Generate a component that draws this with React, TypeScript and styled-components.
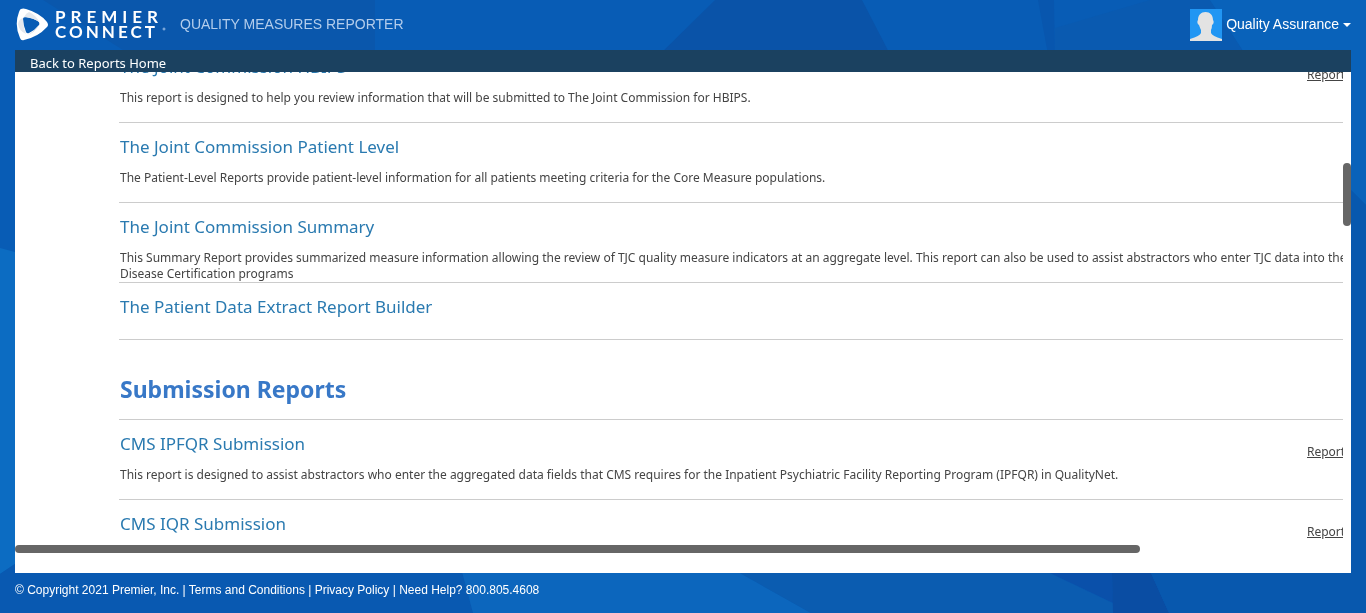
import React, { useLayoutEffect, useRef } from "react";
import styled, { createGlobalStyle } from "styled-components";

const GlobalStyle = createGlobalStyle`
  * { box-sizing: border-box; }
  body {
    margin: 0;
    background: #085cb5;
    font-family: "Liberation Sans", Arial, sans-serif;
  }
`;

const bodyFont = `Tahoma, "Noto Sans", sans-serif`;

const Page = styled.div`
  height: 100vh;
  display: flex;
  flex-direction: column;
`;

const Backdrop = styled.svg`
  position: fixed;
  inset: 0;
  width: 100%;
  height: 100%;
  z-index: -1;
`;

const Header = styled.header`
  flex: none;
  height: 50px;
  padding: 0 15px;
  display: flex;
  align-items: center;
`;

const Logo = styled.svg`
  width: 152px;
  height: 40px;
  flex: none;
`;

const LogoText = styled.text<{ $tracking: number }>`
  font-family: Lato, sans-serif;
  font-size: 17px;
  font-weight: 700;
  letter-spacing: ${(p) => p.$tracking}px;
  fill: #fff;
`;

const AppName = styled.span`
  margin-left: 13px;
  padding-bottom: 2px;
  font-size: 14px;
  line-height: 20px;
  color: #b3cdec;
  white-space: nowrap;
`;

const UserButton = styled.button`
  margin-left: auto;
  padding: 0;
  border: 0;
  background: none;
  color: #fff;
  font-family: inherit;
  font-size: 14px;
  display: flex;
  align-items: center;
  gap: 4px;
  white-space: nowrap;
`;

const Avatar = styled.svg`
  width: 32px;
  height: 32px;
`;

const UserName = styled.span`
  padding-bottom: 2px;
`;

const Caret = styled.span`
  border: 4px solid transparent;
  border-top-color: #fff;
  border-bottom: 0;
`;

const Panel = styled.main`
  flex: 1;
  min-height: 0;
  margin: 0 15px;
  padding-bottom: 20px;
  background: #fff;
  display: flex;
  flex-direction: column;
`;

const NavBar = styled.nav`
  flex: none;
  height: 22px;
  padding: 4px 15px 0;
  background: #1b4160;
`;

const NavLink = styled.a`
  display: block;
  font-family: ${bodyFont};
  font-size: 13px;
  line-height: 18px;
  color: #fff;
  text-decoration: none;
`;

const ScrollArea = styled.div`
  flex: 1;
  min-height: 0;
  display: grid;
  grid-template-columns: minmax(0, 1fr) 8px;
  grid-template-rows: minmax(0, 1fr) 8px;
`;

const Viewport = styled.div`
  overflow: auto;
  scrollbar-width: none;
  padding-left: 104px;
  font-family: ${bodyFont};
`;

const TrackY = styled.div`
  padding-top: 91px;
`;

const ThumbY = styled.div`
  height: 63px;
  border-radius: 4px;
  background: #666;
`;

const ThumbX = styled.div`
  width: 1125px;
  max-width: 100%;
  border-radius: 4px;
  background: #666;
`;

const Row = styled.article<{ $compact?: boolean }>`
  min-height: ${(p) => (p.$compact ? 57 : 80)}px;
  padding: 12px 0 0 1px;
  border-top: 1px solid #ccc;
  display: grid;
  grid-template-columns: minmax(0, 1fr) 36px;
  align-content: start;
  row-gap: 11px;
  overflow: hidden;
`;

const Title = styled.a`
  font-size: 17px;
  line-height: 24px;
  color: #2a7ab0;
  text-decoration: none;
  white-space: nowrap;
`;

const ReportLink = styled.a`
  padding-top: 12px;
  font-size: 12px;
  line-height: 16px;
  height: 24px;
  color: #444;
`;

const Description = styled.p`
  grid-column: 1 / -1;
  margin: 0;
  font-size: 12px;
  line-height: 16px;
  color: #444;
  white-space: pre;
`;

const SectionTitle = styled.h2`
  height: 80px;
  margin: 0;
  padding: 33px 0 0 1px;
  border-top: 1px solid #ccc;
  font-size: 23px;
  line-height: 32px;
  font-weight: 700;
  color: #3878c7;
`;

const Footer = styled.footer`
  flex: none;
  height: 40px;
  padding: 0 15px;
  font-size: 12px;
  line-height: 34px;
  color: #fff;
  white-space: nowrap;

  a {
    color: inherit;
    text-decoration: none;
  }
`;

interface Report {
  title: string;
  description?: string;
  link?: boolean;
}

const jointCommission: Report[] = [
  {
    title: "The Joint Commission HBIPS",
    description:
      "This report is designed to help you review information that will be submitted to The Joint Commission for HBIPS.",
    link: true,
  },
  {
    title: "The Joint Commission Patient Level",
    description:
      "The Patient-Level Reports provide patient-level information for all patients meeting criteria for the Core Measure populations.",
  },
  {
    title: "The Joint Commission Summary",
    description:
      "This Summary Report provides summarized measure information allowing the review of TJC quality measure indicators at an aggregate level. This report can also be used to assist abstractors who enter TJC data into the\nDisease Certification programs",
  },
  { title: "The Patient Data Extract Report Builder" },
];

const submissions: Report[] = [
  {
    title: "CMS IPFQR Submission",
    description:
      "This report is designed to assist abstractors who enter the aggregated data fields that CMS requires for the Inpatient Psychiatric Facility Reporting Program (IPFQR) in QualityNet.",
    link: true,
  },
  { title: "CMS IQR Submission", link: true },
];

function ReportRow({ title, description, link }: Report) {
  return (
    <Row $compact={!description}>
      <Title href="#">{title}</Title>
      {link && <ReportLink href="#">Report</ReportLink>}
      {description && <Description>{description}</Description>}
    </Row>
  );
}

function BackdropArt() {
  return (
    <Backdrop viewBox="0 0 1366 613" preserveAspectRatio="none" aria-hidden="true">
      <rect width="1366" height="613" fill="#085cb5" />
      <path d="M43 0H375V60H139Z" fill="#0a57ac" />
      <path d="M715 0H862L893 60H654Z" fill="#0a53a8" />
      <path d="M1038 0H1054L1055 60H1049Z" fill="#0856ae" />
      <path d="M1055 28L1150 0H1210L1249 60H1055Z" fill="#0a5ab0" />
      <path d="M1210 0H1366V205L1351 190V60H1249Z" fill="#0962ba" />
      <path d="M1351 190L1366 205V613H1351Z" fill="#0858ae" />
      <path d="M0 248L15 252V564L0 574Z" fill="#0c6cc2" />
      <path d="M0 574L15 564H460L473 613H0Z" fill="#0959b1" />
      <path d="M460 564L473 613H811L740 573Z" fill="#0c66bd" />
      <path d="M740 573H1050L1133 613H811Z" fill="#0b5cb0" />
      <path d="M1050 573H1112L1113 603Z" fill="#0a50aa" />
      <path d="M1112 573H1151L1169 613H1113Z" fill="#0a4da3" />
      <path d="M1151 573H1366V613H1169Z" fill="#0858ae" />
    </Backdrop>
  );
}

export default function App() {
  const viewport = useRef<HTMLDivElement>(null);

  useLayoutEffect(() => {
    if (viewport.current) viewport.current.scrollTop = 30;
  }, []);

  return (
    <Page>
      <GlobalStyle />
      <BackdropArt />
      <Header>
        <Logo viewBox="0 0 152 40" role="img" aria-label="Premier Connect">
          <path
            fillRule="evenodd"
            fill="#fff"
            d="M6 4Q8 3 11 4Q25 8 32 17Q34 20 32 22Q23 32 9 35Q6 36 5 33Q-1 20 4 7Q5 4 6 4ZM8 14Q8 20 11 27Q12 29 14 28Q20 25 24 20Q25 18 23 16Q18 13 11 12Q8 12 8 14Z"
          />
          <path d="M14 7Q21 10 25 18Q20 13 9 12Q11 8 14 7Z" fill="#e3e8ee" />
          <path d="M24 20Q21 27 9 32Q18 28 24 20Z" fill="#d5dbe3" />
          <path d="M3 19Q4 26 11 29Q8 22 8 13Q4 14 3 19Z" fill="#e5e8ed" />
          <LogoText x="40" y="18" $tracking={5}>PREMIER</LogoText>
          <LogoText x="40" y="33" $tracking={3}>CONNECT</LogoText>
          <circle cx="149" cy="24" r="1" fill="none" stroke="#9fc0e6" />
        </Logo>
        <AppName>QUALITY MEASURES REPORTER</AppName>
        <UserButton type="button">
          <Avatar viewBox="0 0 32 32" aria-hidden="true">
            <rect width="32" height="32" fill="#2196f3" />
            <path
              d="M8 11C8 6 11 3 15.500 3S23 6 23 11C24 12 24 15 22 16Q22 19 21 21V24Q22 27 32 30V32H0V30Q10 27 11 24V21Q10 19 9 16C7 15 7 12 8 11Z"
              fill="#e3e3e3"
            />
          </Avatar>
          <UserName>Quality Assurance</UserName>
          <Caret />
        </UserButton>
      </Header>
      <Panel>
        <NavBar>
          <NavLink href="#">Back to Reports Home</NavLink>
        </NavBar>
        <ScrollArea>
          <Viewport ref={viewport}>
            {jointCommission.map((r) => (
              <ReportRow key={r.title} {...r} />
            ))}
            <SectionTitle>Submission Reports</SectionTitle>
            {submissions.map((r) => (
              <ReportRow key={r.title} {...r} />
            ))}
          </Viewport>
          <TrackY>
            <ThumbY />
          </TrackY>
          <ThumbX />
        </ScrollArea>
      </Panel>
      <Footer>
        © Copyright 2021 Premier, Inc. | <a href="#">Terms and Conditions</a> |{" "}
        <a href="#">Privacy Policy</a> | Need Help? 800.805.4608
      </Footer>
    </Page>
  );
}
